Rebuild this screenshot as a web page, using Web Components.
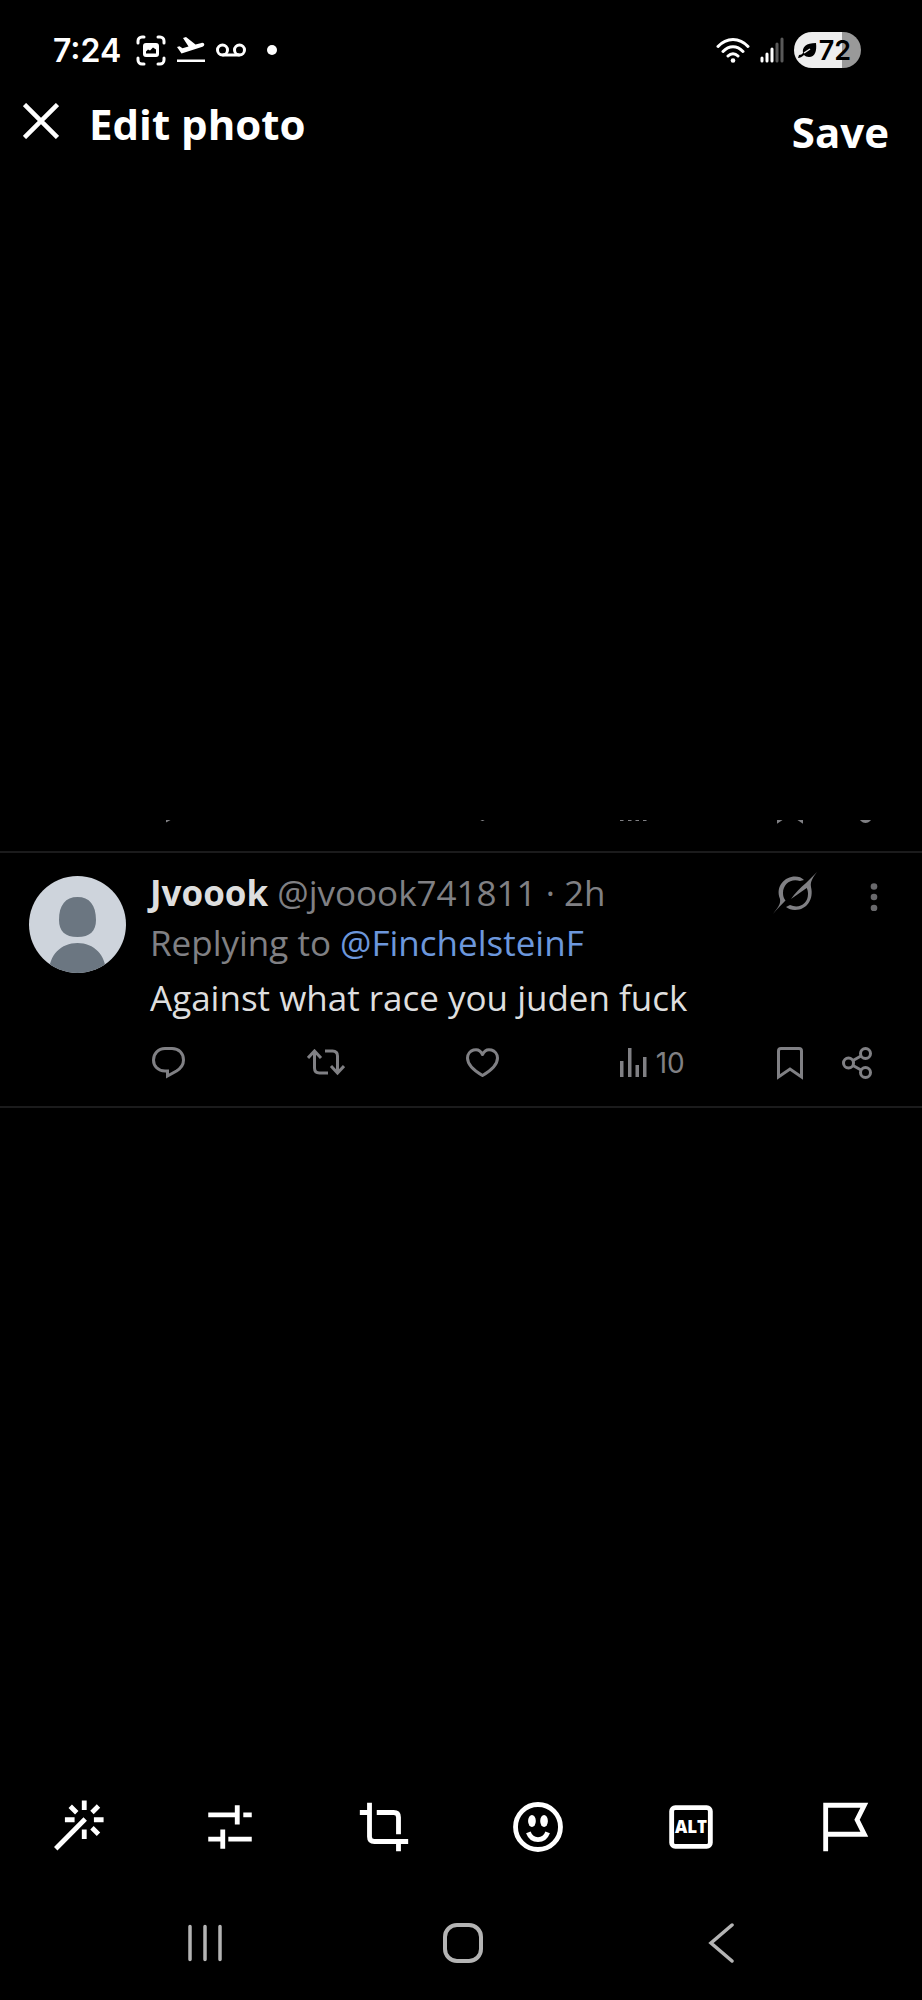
<!DOCTYPE html>
<html lang="en">
<head>
<meta charset="utf-8">
<meta name="viewport" content="width=device-width, initial-scale=1">
<title>Edit photo</title>
<style>
  body {
    margin: 0;
    background: #000;
    color: #fff;
    font-family: "Open Sans", "Noto Sans", sans-serif;
  }
</style>
</head>
<body>
<photo-editor></photo-editor>

<script>
// name: [width, height, markup]
const ICONS = {
  capture: [30, 31, `<g fill="none" stroke="currentColor" stroke-width="3" stroke-linecap="round"><path d="M2 8V6a4 4 0 0 1 4-4h2M22 2h2a4 4 0 0 1 4 4v2M28 23v2a4 4 0 0 1-4 4h-2M8 29H6a4 4 0 0 1-4-4v-2"/></g><path fill="currentColor" fill-rule="evenodd" d="M10 8h10a3 3 0 0 1 3 3v8a3 3 0 0 1-3 3H10a3 3 0 0 1-3-3v-8a3 3 0 0 1 3-3zM10 18.500h10v-4l-3-2-3 3-2-1-2 2z"/>`],
  plane: [28, 26, `<path fill="currentColor" d="M0 22.500h28V25H0zM0 10l2.500-.7 3 2 6-1.800L6 1l3-1 9.500 7.500 6-1.600c3-.7 4 2.800 1 3.800L4.500 16.500z"/>`],
  voicemail: [30, 14, `<g fill="none" stroke="currentColor" stroke-width="3"><circle cx="6.500" cy="7" r="5"/><circle cx="23.500" cy="7" r="5"/><path d="M6.500 12h17"/></g>`],
  wifi: [34, 26, `<g fill="none" stroke="currentColor" stroke-width="3" stroke-linecap="round"><path d="M2 9.500C10.500 0 23.500 0 32 9.500M7 14.500c6-6.500 14-6.500 20 0M12 19c3-3 7-3 10 0"/></g><circle cx="17" cy="23.500" r="2.300" fill="currentColor"/>`],
  signal: [24, 26, `<g stroke="currentColor" stroke-width="3" stroke-linecap="round"><path d="M2 21v3M7 17v7M12 12v12"/><g opacity=".35"><path d="M17 7v17M22 2v22"/></g></g>`],
  leaf: [19, 18, `<path fill="currentColor" d="M1 14c2 0 3-1 4-2-1-6 3-10 13-10 1 8-1 14-7 14-2 0-4-1-5-2-2 2-4 3-6 3z"/><path d="M6 12l6-4" stroke="#eee" stroke-width="1.500"/>`],
  close: [36, 36, `<path d="M1.500 1.500l33 33M34.500 1.500l-33 33" stroke="currentColor" stroke-width="4.500"/>`],
  avatar: [97, 97, `<clipPath id="c"><circle cx="48.500" cy="48.500" r="48.500"/></clipPath><g clip-path="url(#c)"><path fill="#ced4dc" d="M0 0h97v97H0z"/><path fill="#6b7681" d="M48.500 21c12 0 18.500 8 18.500 23 0 11-6 17-18.500 17S30 55 30 44c0-15 6.500-23 18.500-23zM48.500 67C65 67 77 79 77 97H20c0-18 12-30 28.500-30z"/></g>`],
  grok: [44, 42, `<path fill="currentColor" d="M44 0C40.500 5 37 9 38 15c3 12-4 23-16 23-3.500 0-6.500-1-9-3l4-2c9 4 18-1 18-11 0-2-.3-4-1.300-6L18 27c4-6 9-11 15-16zM31 8l-4 1C18 6 10 12 10 21c0 3 .7 5 2.500 7.500C9 32 4 37 0 42c4-6 8-9 7-15C2 14 12 4.500 22 4.500c4 0 6.500 1 9 3.500z"/>`],
  more: [8, 28, `<g fill="currentColor"><circle cx="4" cy="3.500" r="3.300"/><circle cx="4" cy="14" r="3.300"/><circle cx="4" cy="25" r="3.300"/></g>`],
  reply: [34, 32, `<path fill="none" stroke="currentColor" stroke-width="3" d="M13 1.500h7C27 1.500 31.500 6.500 31.500 13c0 5-3 8.500-7 11L15.500 29v-5H13C6 24 1.500 19 1.500 13S6 1.500 13 1.500z"/>`],
  repost: [38, 28, `<g fill="none" stroke="currentColor" stroke-width="3"><path d="M1 9l6.500-7L14 9M7.500 3v16q0 5 5 5H21M18 2h7.500q5 0 5 5v16M24 17l6.500 7 6.500-7"/></g>`],
  like: [33, 30, `<path fill="none" stroke="currentColor" stroke-width="3" stroke-linejoin="round" d="M16.500 27.500C7 22 1.500 16 1.500 10c0-8 11-12 15-3.500C20.500-2 31.500 2 31.500 10c0 6-5.500 12-15 17.500z"/>`],
  views: [28, 30, `<path fill="currentColor" d="M0 13h3.500v16H0zM8 0h3.500v29H8zM15.500 17H19v12h-3.500zM23 9h3.500v20H23z"/>`],
  bookmark: [26, 33, `<path fill="none" stroke="currentColor" stroke-width="3" d="M4 1.500h18q2.500 0 2.500 2.500v26L13 22 1.500 30V4Q1.500 1.500 4 1.500z"/>`],
  share: [30, 32, `<g fill="none" stroke="currentColor" stroke-width="3"><circle cx="6.500" cy="16" r="5"/><circle cx="23.500" cy="6.500" r="5"/><circle cx="23.500" cy="25.500" r="5"/><path d="M11 13.500l8-4.500M11 18.500l8 4.500"/></g>`],
  recents: [36, 38, `<path d="M3 2.500v33M18 2.500v33M33 2.500v33" stroke="currentColor" stroke-width="3.500" stroke-linecap="round"/>`],
  home: [40, 40, `<rect x="2" y="2" width="36" height="36" rx="12" fill="none" stroke="currentColor" stroke-width="4"/>`],
  back: [26, 40, `<path d="M24 2L3 20l21 18" fill="none" stroke="currentColor" stroke-width="3.500" stroke-linecap="round"/>`]
};

// toolbar icons share one 24 unit grid
const TOOLS = {
  wand: `<path d="M3.200 21L15.400 8.700M15 1v4M15 13v4M7 9h4M19 9h4M9.200 3.400l2.700 2.700M18.200 6l2.700-2.700M18.200 12.300l2.700 2.700"/>`,
  adjust: `<path d="M3 7h12M15 3v8M17.500 7H21M3 17h6M9 13v8M11.300 17H21"/>`,
  crop: `<path d="M2 6h4M6 2v14q0 2 2 2h14M9 6h7q2 0 2 2v7M18 18v4"/>`,
  sticker: `<circle cx="12" cy="12" r="9.300"/><path d="M8 14.200c1.500 4 6.500 4 8 0"/><g fill="currentColor" stroke="none"><ellipse cx="9.500" cy="9.500" rx="1.600" ry="2.500"/><ellipse cx="14.500" cy="9.500" rx="1.600" ry="2.500"/></g>`,
  alt: `<rect x="4" y="4" width="16" height="16" rx="1.500"/><text x="12" y="14.500" text-anchor="middle" font-size="7" font-weight="800" fill="currentColor" stroke="none">ALT</text>`,
  flag: `<path d="M4 22V3h16l-3 6 3 6H4"/>`
};

class UiIcon extends HTMLElement {
  constructor() {
    super();
    this.attachShadow({ mode: 'open' });
  }

  connectedCallback() {
    const name = this.getAttribute('name');
    let svg;
    if (TOOLS[name]) {
      svg = `<svg width="58" height="58" viewBox="0 0 24 24" fill="none" stroke="currentColor" stroke-width="2" aria-hidden="true">${TOOLS[name]}</svg>`;
    } else {
      const [w, h, body] = ICONS[name];
      svg = `<svg width="${w}" height="${h}" viewBox="0 0 ${w} ${h}" aria-hidden="true">${body}</svg>`;
    }
    this.shadowRoot.innerHTML = `
      <style>
        :host { display: inline-flex; flex: none; }
        svg { display: block; }
      </style>
      ${svg}
    `;
  }
}

class StatusBar extends HTMLElement {
  constructor() {
    super();
    this.attachShadow({ mode: 'open' });
    this.shadowRoot.innerHTML = `
      <style>
        :host {
          display: flex;
          align-items: center;
          justify-content: space-between;
          box-sizing: border-box;
          height: 100px;
          padding: 0 61px 0 53px;
          font-family: Inter, sans-serif;
          font-weight: 600;
        }
        .side { display: flex; align-items: center; gap: 11px; }
        .side:last-child { gap: 10px; }
        .time { font-size: 32px; margin-right: 4px; }
        .dot { width: 10px; height: 10px; margin-left: 10px; border-radius: 50%; background: #fff; }
        .battery {
          display: flex;
          align-items: center;
          justify-content: center;
          gap: 2px;
          box-sizing: border-box;
          width: 67px;
          height: 36px;
          padding-right: 6px;
          border-radius: 18px;
          background: linear-gradient(90deg, #eee 72%, #999 72%);
          color: #000;
          font-size: 27px;
        }
      </style>
      <div class="side">
        <span class="time">7:24</span>
        <ui-icon name="capture"></ui-icon>
        <ui-icon name="plane"></ui-icon>
        <ui-icon name="voicemail"></ui-icon>
        <span class="dot"></span>
      </div>
      <div class="side">
        <ui-icon name="wifi"></ui-icon>
        <ui-icon name="signal"></ui-icon>
        <span class="battery"><ui-icon name="leaf"></ui-icon><span>72</span></span>
      </div>
    `;
  }
}

class EditorHeader extends HTMLElement {
  constructor() {
    super();
    this.attachShadow({ mode: 'open' });
    this.shadowRoot.innerHTML = `
      <style>
        :host {
          display: flex;
          align-items: flex-start;
          box-sizing: border-box;
          height: 60px;
          padding: 0 33px 4px 23px;
        }
        button {
          padding: 0;
          border: 0;
          background: none;
          color: inherit;
          font: inherit;
          cursor: pointer;
        }
        .close { display: flex; padding-top: 3px; }
        h1, .save { margin: 0; font-size: 42px; line-height: 48px; font-weight: 700; }
        h1 { flex: 1; padding-left: 30px; }
        .save { align-self: flex-end; }
      </style>
      <button class="close" aria-label="Close"><ui-icon name="close"></ui-icon></button>
      <h1><slot></slot></h1>
      <button class="save">Save</button>
    `;
  }
}

class PostActions extends HTMLElement {
  constructor() {
    super();
    this.attachShadow({ mode: 'open' });
    this.shadowRoot.innerHTML = `
      <style>
        :host {
          display: grid;
          grid-template-columns: 155fr 159fr 153fr 157fr 65fr 31fr;
          align-items: center;
          height: 34px;
          color: #808084;
        }
        button {
          display: flex;
          align-items: center;
          gap: 8px;
          height: 34px;
          padding: 0 0 0 2px;
          border: 0;
          background: none;
          color: inherit;
          font: 28px/34px Inter, sans-serif;
          cursor: pointer;
        }
      </style>
      <button aria-label="Reply"><ui-icon name="reply"></ui-icon></button>
      <button aria-label="Repost"><ui-icon name="repost"></ui-icon></button>
      <button aria-label="Like"><ui-icon name="like"></ui-icon></button>
      <button aria-label="Views"><ui-icon name="views"></ui-icon><slot></slot></button>
      <button aria-label="Bookmark"><ui-icon name="bookmark"></ui-icon></button>
      <button aria-label="Share"><ui-icon name="share"></ui-icon></button>
    `;
  }
}

class SocialPost extends HTMLElement {
  constructor() {
    super();
    this.attachShadow({ mode: 'open' });
    this.shadowRoot.innerHTML = `
      <style>
        :host {
          display: grid;
          grid-template-columns: 97px 1fr;
          column-gap: 24px;
          box-sizing: border-box;
          padding: 15px 50px 26px 29px;
          border: solid #1b1b1c;
          border-width: 2px 0;
          font-size: 35px;
          line-height: 50px;
          color: #808084;
        }
        .avatar { margin-top: 8px; }
        .top { display: flex; align-items: center; margin-right: -6px; }
        .who { flex: 1; white-space: nowrap; }
        .grok, .more {
          display: flex;
          padding: 0;
          border: 0;
          background: none;
          color: inherit;
          cursor: pointer;
        }
        .more { margin: 8px 0 0 53px; color: #69696c; }
        ::slotted([slot="name"]) { color: #dedede; font-weight: 700; }
        .text { margin: 5px 0 23px; color: #dedede; }
      </style>
      <ui-icon class="avatar" name="avatar"></ui-icon>
      <div>
        <div class="top">
          <div class="who"><slot name="name"></slot> <slot name="meta"></slot></div>
          <button class="grok" aria-label="Explain this post"><ui-icon name="grok"></ui-icon></button>
          <button class="more" aria-label="More"><ui-icon name="more"></ui-icon></button>
        </div>
        <div><slot name="context"></slot></div>
        <div class="text"><slot></slot></div>
        <post-actions><slot name="views"></slot></post-actions>
      </div>
    `;
  }
}

class PhotoCanvas extends HTMLElement {
  constructor() {
    super();
    this.attachShadow({ mode: 'open' });
    this.shadowRoot.innerHTML = `
      <style>
        :host {
          display: flex;
          flex: 1;
          flex-direction: column;
          justify-content: center;
        }
        /* the photo starts on the last few pixels of the post above */
        .previous {
          display: flex;
          flex-direction: column;
          justify-content: flex-end;
          height: 4px;
          overflow: hidden;
          padding: 0 50px 0 150px;
          margin-bottom: 27px;
        }
      </style>
      <div class="previous"><post-actions></post-actions></div>
      <slot></slot>
    `;
  }
}

class EditorTools extends HTMLElement {
  constructor() {
    super();
    this.attachShadow({ mode: 'open' });
    this.shadowRoot.innerHTML = `
      <style>
        :host {
          display: grid;
          grid-template-columns: repeat(6, 1fr);
          height: 118px;
        }
        button {
          display: flex;
          align-items: center;
          justify-content: center;
          padding: 0;
          border: 0;
          background: none;
          color: inherit;
          font: inherit;
          cursor: pointer;
        }
      </style>
      <button aria-label="Enhance"><ui-icon name="wand"></ui-icon></button>
      <button aria-label="Adjust"><ui-icon name="adjust"></ui-icon></button>
      <button aria-label="Crop"><ui-icon name="crop"></ui-icon></button>
      <button aria-label="Stickers"><ui-icon name="sticker"></ui-icon></button>
      <button aria-label="Description"><ui-icon name="alt"></ui-icon></button>
      <button aria-label="Content warning"><ui-icon name="flag"></ui-icon></button>
    `;
  }
}

class SystemNav extends HTMLElement {
  constructor() {
    super();
    this.attachShadow({ mode: 'open' });
    this.shadowRoot.innerHTML = `
      <style>
        :host {
          display: grid;
          grid-template-columns: repeat(3, 1fr);
          height: 114px;
          padding: 0 72px 0 76px;
          color: #b4b4b4;
        }
        button {
          display: flex;
          align-items: center;
          justify-content: center;
          padding: 0;
          border: 0;
          background: none;
          color: inherit;
        }
      </style>
      <button aria-label="Recent apps"><ui-icon name="recents"></ui-icon></button>
      <button aria-label="Home"><ui-icon name="home"></ui-icon></button>
      <button aria-label="Back"><ui-icon name="back"></ui-icon></button>
    `;
  }
}

class PhotoEditor extends HTMLElement {
  constructor() {
    super();
    this.attachShadow({ mode: 'open' });
    this.shadowRoot.innerHTML = `
      <style>
        :host {
          display: flex;
          flex-direction: column;
          min-height: 100vh;
        }
        a { color: #6c97dc; text-decoration: none; }
      </style>
      <status-bar></status-bar>
      <editor-header>Edit photo</editor-header>
      <photo-canvas>
        <social-post>
          <span slot="name">Jvoook</span>
          <span slot="meta">@jvoook741811 · 2h</span>
          <span slot="context">Replying to <a href="#">@FinchelsteinF</a></span>
          Against what race you juden fuck
          <span slot="views">10</span>
        </social-post>
      </photo-canvas>
      <editor-tools></editor-tools>
      <system-nav></system-nav>
    `;
  }
}

customElements.define('ui-icon', UiIcon);
customElements.define('status-bar', StatusBar);
customElements.define('editor-header', EditorHeader);
customElements.define('post-actions', PostActions);
customElements.define('social-post', SocialPost);
customElements.define('photo-canvas', PhotoCanvas);
customElements.define('editor-tools', EditorTools);
customElements.define('system-nav', SystemNav);
customElements.define('photo-editor', PhotoEditor);
</script>
</body>
</html>
